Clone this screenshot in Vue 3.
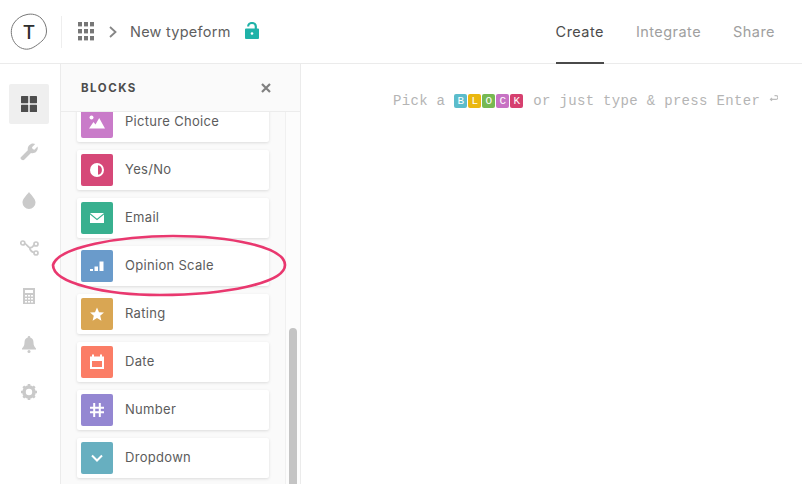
<script setup>
const blocks = [
  { name: 'Picture Choice', color: '#c97bc9', icon: 'picture' },
  { name: 'Yes/No', color: '#d64878', icon: 'yesno' },
  { name: 'Email', color: '#38b08f', icon: 'email' },
  { name: 'Opinion Scale', color: '#6a9bcb', icon: 'scale' },
  { name: 'Rating', color: '#d9a653', icon: 'rating' },
  { name: 'Date', color: '#fb7d66', icon: 'date' },
  { name: 'Number', color: '#9487d2', icon: 'number' },
  { name: 'Dropdown', color: '#67afc0', icon: 'dropdown' }
]
const letters = [
  { l: 'B', c: '#5bbccb' },
  { l: 'L', c: '#eab70f' },
  { l: 'O', c: '#77b953' },
  { l: 'C', c: '#c772c4' },
  { l: 'K', c: '#d6406f' }
]
</script>

<template>
  <div class="app">
    <header class="top">
      <div class="brand">
        <div class="logo">
          <svg class="blob" width="38" height="38" viewBox="0 0 38 38">
            <path d="M17 1.500C22 0.500 27 1.500 31 5C34.500 8.500 36.500 13 36.500 18C36.500 24 33 27.500 29 30.500C24.500 34 20 37 14.500 36C9 35 4.500 31 2.500 25.500C0.500 20 1 14.500 4 10C7 5.500 11.500 2.500 17 1.500Z" fill="none" stroke="#777" stroke-width="1"/>
          </svg>
          <span class="t">T</span>
        </div>
        <div class="vline"></div>
        <svg class="apps" width="16" height="19" viewBox="0 0 16 19" fill="#777">
          <rect x="0" y="0" width="4" height="4.400"/><rect x="6" y="0" width="4" height="4.400"/><rect x="12" y="0" width="4" height="4.400"/>
          <rect x="0" y="7" width="4" height="4.400"/><rect x="6" y="7" width="4" height="4.400"/><rect x="12" y="7" width="4" height="4.400"/>
          <rect x="0" y="14" width="4" height="4.400"/><rect x="6" y="14" width="4" height="4.400"/><rect x="12" y="14" width="4" height="4.400"/>
        </svg>
        <svg class="chev" width="8" height="12" viewBox="0 0 8 12"><path d="M1 1l5.500 5L1 11" fill="none" stroke="#858585" stroke-width="1.800"/></svg>
        <span class="title">New typeform</span>
        <svg class="lock" width="14" height="17" viewBox="0 0 14 17">
          <path d="M3.200 4.500V4.200a3.800 3.200 0 0 1 7.600 0V7" fill="none" stroke="#1fb2a8" stroke-width="2.200"/>
          <path d="M1 6.500h12a1 1 0 0 1 1 1V16a1 1 0 0 1-1 1H1a1 1 0 0 1-1-1V7.500a1 1 0 0 1 1-1z" fill="#1fb2a8"/>
          <circle cx="7" cy="11.500" r="1.300" fill="#fff"/>
        </svg>
      </div>
      <nav class="tabs">
        <a class="tab active">Create</a>
        <a class="tab">Integrate</a>
        <a class="tab">Share</a>
      </nav>
    </header>

    <main class="body">
      <aside class="rail">
        <div class="rail-item on">
          <svg width="16" height="16" viewBox="0 0 16 16" fill="#4d4d4d">
            <rect width="7.200" height="7.200" rx=".6"/><rect x="8.800" width="7.200" height="7.200" rx=".6"/><rect y="8.800" width="7.200" height="7.200" rx=".6"/><rect x="8.800" y="8.800" width="7.200" height="7.200" rx=".6"/>
          </svg>
        </div>
        <div class="rail-item">
          <svg width="18" height="18" viewBox="0 0 18 18" fill="#cacaca"><path d="M.8 14.200L7.800 7.200C7.300 4.500 8.500 2 11 .9C12.500 .3 14 .4 15.200 1L12 4.300L12.600 6.100L14.400 6.700L17.500 3.500C18.100 5.300 17.600 7.300 16.200 8.700C14.700 10.100 12.700 10.400 11 9.900L4.200 16.800C2.800 18.100 -.6 15.800 .8 14.200Z"/></svg>
        </div>
        <div class="rail-item">
          <svg width="14" height="17" viewBox="0 0 14 17" fill="#cacaca"><path d="M7 0C9 3 13.500 6.500 13.500 10.500A6.500 6.500 0 0 1 .5 10.500C.5 6.500 5 3 7 0Z"/></svg>
        </div>
        <div class="rail-item">
          <svg width="19" height="16" viewBox="0 0 19 16" fill="none" stroke="#cacaca" stroke-width="1.700"><circle cx="2.800" cy="3" r="2"/><circle cx="16" cy="4" r="2"/><circle cx="16" cy="13" r="2"/><path d="M4.800 3.500C7 4.500 8 7 9.500 7.500S13 7 14 4.500M9.500 7.500c.5 2.500 2.500 4.500 4.500 5"/></svg>
        </div>
        <div class="rail-item">
          <svg width="12" height="16" viewBox="0 0 12 16"><rect width="12" height="16" fill="#cacaca"/><rect x="2" y="2" width="8" height="3" fill="#fff"/><g fill="#fff"><rect x="2" y="7" width="2" height="1.500"/><rect x="5" y="7" width="2" height="1.500"/><rect x="8" y="7" width="2" height="1.500"/><rect x="2" y="10" width="2" height="1.500"/><rect x="5" y="10" width="2" height="1.500"/><rect x="8" y="10" width="2" height="1.500"/><rect x="2" y="13" width="2" height="1.500"/><rect x="5" y="13" width="2" height="1.500"/><rect x="8" y="13" width="2" height="1.500"/></g></svg>
        </div>
        <div class="rail-item">
          <svg width="14" height="17" viewBox="0 0 14 17" fill="#cacaca"><path d="M7 0a1.200 1.200 0 0 1 1.200 1.400C10.500 2 11.500 4 11.500 6.500C11.500 9.500 12.500 11 14 12.500V13.500H0V12.500C1.500 11 2.500 9.500 2.500 6.500C2.500 4 3.500 2 5.800 1.400A1.200 1.200 0 0 1 7 0Z"/><circle cx="7" cy="15.500" r="1.500"/></svg>
        </div>
        <div class="rail-item">
          <svg width="16" height="16" viewBox="0 0 16 16"><circle cx="8" cy="8" r="5" fill="none" stroke="#cacaca" stroke-width="3.600"/><g stroke="#cacaca" stroke-width="2.600"><path d="M8 0v3M8 13v3M0 8h3M13 8h3M2.300 2.300l2.100 2.100M11.600 11.600l2.100 2.100M2.300 13.700l2.100-2.100M11.600 4.400l2.100-2.100"/></g></svg>
        </div>
      </aside>

      <section class="panel">
        <div class="panel-head">
          <span class="panel-title">BLOCKS</span>
          <svg width="10" height="10" viewBox="0 0 10 10"><path d="M1 1l8 8M9 1l-8 8" stroke="#808080" stroke-width="2.200"/></svg>
        </div>
        <div class="panel-body">
          <ul class="list">
            <li v-for="b in blocks" :key="b.name" class="card">
              <span class="tile" :style="{ background: b.color }">
                <svg width="16" height="16" viewBox="0 0 16 16" fill="#fff">
                  <template v-if="b.icon === 'picture'">
                    <circle cx="2.500" cy="3.500" r="2"/>
                    <path d="M0 14.500L4.500 8L6.500 10.500L10.200 4L16 14.500Z"/>
                  </template>
                  <template v-else-if="b.icon === 'yesno'">
                    <path fill-rule="evenodd" d="M8 1a7 7 0 1 0 0 14A7 7 0 0 0 8 1ZM9 3.200a4.900 4.900 0 0 1 0 9.600Z"/>
                  </template>
                  <template v-else-if="b.icon === 'email'">
                    <path d="M1 3H15L8 8.800Z"/>
                    <path d="M1 4.500V13H15V4.500L8 10.200Z"/>
                  </template>
                  <template v-else-if="b.icon === 'scale'">
                    <rect x="1" y="11" width="3" height="2"/><rect x="5.500" y="8.500" width="3.500" height="4.500"/><rect x="10.500" y="3.500" width="4" height="9.500"/>
                  </template>
                  <template v-else-if="b.icon === 'rating'">
                    <path d="M8 1.500L10 6.200L15 6.600L11.200 9.800L12.400 14.700L8 12.100L3.600 14.700L4.800 9.800L1 6.600L6 6.200Z"/>
                  </template>
                  <template v-else-if="b.icon === 'date'">
                    <path fill-rule="evenodd" d="M3 0.500H5V2.500H11V0.500H13V2.500H15V15H1V2.500H3ZM3 7V13H13V7Z"/>
                  </template>
                  <template v-else-if="b.icon === 'number'">
                    <path d="M4.200 1H6.200V4.800H9.800V1H11.800V4.800H15V6.700H11.800V9.300H15V11.200H11.800V15H9.800V11.200H6.200V15H4.200V11.200H1V9.300H4.200V6.700H1V4.800H4.200ZM6.200 6.700V9.300H9.800V6.700Z" fill-rule="evenodd"/>
                  </template>
                  <template v-else>
                    <path d="M3 5.500L8 10.500L13 5.500" fill="none" stroke="#fff" stroke-width="2"/>
                  </template>
                </svg>
              </span>
              <span class="name">{{ b.name }}</span>
            </li>
          </ul>
          <div class="track"><div class="thumb"></div></div>
        </div>
      </section>

      <section class="canvas">
        <p class="hint">
          <span>Pick a</span>
          <span class="word"><b v-for="x in letters" :key="x.l" :style="{ background: x.c }">{{ x.l }}</b></span>
          <span>or just type &amp; press Enter</span>
          <svg class="enter" width="9" height="9" viewBox="0 0 9 9" fill="none" stroke="#bdbdbd" stroke-width="1.200"><path d="M5.500 .6H7a1.800 1.800 0 0 1 0 3.800H1.500"/><path d="M3 3L1.500 4.400L3 5.800"/></svg>
        </p>
      </section>
    </main>

    <svg class="ring" width="240" height="66" viewBox="0 0 240 66">
      <path d="M3 32C8 14 70 3 123 3C180 3 235 14 235 32C235 50 175 62 110 62C55 62 3 50 3 32Z" fill="none" stroke="#e9386f" stroke-width="2.700"/>
    </svg>
  </div>
</template>

<style>
html, body { margin: 0; background: #fff; }
</style>

<style scoped>
.app {
  position: relative;
  width: 802px;
  height: 484px;
  overflow: hidden;
  background: #fff;
  font-family: "Inter", "Liberation Sans", sans-serif;
  color: #555;
}
.top {
  height: 63px;
  border-bottom: 1px solid #ebebeb;
  display: flex;
  justify-content: space-between;
}
.brand { display: flex; align-items: center; }
.logo {
  width: 38px;
  height: 38px;
  margin-left: 10px;
  display: grid;
  place-items: center;
  position: relative;
}
.blob { position: absolute; inset: 0; }
.t { font-size: 19px; font-weight: 500; color: #2e2e2e; padding-top: 2px; }
.vline { width: 1px; height: 32px; background: #eee; margin-left: 13px; margin-right: 16px; }
.chev { margin-left: 15px; margin-right: 13px; }
.title { font-size: 14.500px; color: #5f5f5f; letter-spacing: .25px; }
.lock { margin-left: 14px; margin-top: -2px; }
.tabs { display: flex; margin-right: 27px; gap: 32px; }
.tab {
  font-size: 14.500px;
  color: #a0a0a0;
  line-height: 64px;
  height: 64px;
  box-sizing: border-box;
  letter-spacing: .45px;
}
.tab.active { color: #4c4c4c; border-bottom: 2px solid #4a4a4a; }
.body { display: flex; height: 420px; }
.rail {
  width: 58px;
  padding-right: 2px;
  flex: none;
  border-right: 1px solid #ebebeb;
  display: flex;
  flex-direction: column;
  align-items: center;
  padding-top: 20px;
  gap: 8px;
  box-sizing: content-box;
}
.rail-item { width: 40px; height: 40px; display: grid; place-items: center; border-radius: 2px; flex: none; }
.rail-item.on { background: #efefef; }
.panel {
  width: 239px;
  flex: none;
  background: #fafafa;
  border-right: 1px solid #ebebeb;
  display: flex;
  flex-direction: column;
}
.panel-head {
  height: 47px;
  flex: none;
  border-bottom: 1px solid #ececec;
  display: flex;
  align-items: center;
  justify-content: space-between;
  padding: 0 29px 0 20px;
}
.panel-title { font-size: 11.500px; font-weight: 700; letter-spacing: 1.500px; color: #4d4d4d; }
.panel-body { flex: 1; display: flex; justify-content: space-between; overflow: hidden; min-height: 0; }
.list {
  list-style: none;
  margin: -10px 0 0 16px;
  padding: 0;
  display: flex;
  flex-direction: column;
  gap: 8px;
}
.card {
  width: 192px;
  height: 40px;
  flex: none;
  background: #fff;
  display: flex;
  align-items: center;
  padding-left: 4px;
  box-sizing: border-box;
  box-shadow: 0 1px 3px rgba(0, 0, 0, .12);
  border-radius: 2px;
}
.tile { width: 32px; height: 32px; border-radius: 2px; display: grid; place-items: center; }
.name { margin-left: 12px; margin-bottom: 2px; font-size: 13px; color: #5c5c5c; letter-spacing: .3px; }
.track { width: 15px; border-left: 1px solid #f0f0f0; background: #fcfcfc; padding-left: 3px; box-sizing: border-box; }
.thumb { width: 8px; height: 200px; margin-top: 216px; border-radius: 4px; background: #c4c4c4; }
.canvas { flex: 1; min-width: 0; }
.hint {
  margin: 29px 0 0 92px;
  display: flex;
  align-items: center;
  gap: 9px;
  font-family: "Liberation Mono", monospace;
  font-size: 14px;
  letter-spacing: .32px;
  color: #b4b4b4;
  white-space: nowrap;
}
.word { display: flex; }
.word b {
  width: 13px;
  margin-right: 1px;
  height: 14px;
  line-height: 14px;
  border-radius: 2px;
  color: #fff;
  font-size: 11px;
  font-weight: 400;
  text-align: center;
  letter-spacing: 0;
}
.enter { margin-bottom: 4px; }
.ring { position: absolute; left: 50px; top: 233px; pointer-events: none; }
</style>
